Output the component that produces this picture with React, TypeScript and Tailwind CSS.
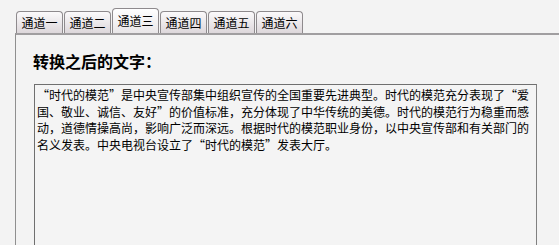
import React from 'react';

const tabs = ['通道一', '通道二', '通道三', '通道四', '通道五', '通道六'];

const lines = [
  '“时代的模范”是中央宣传部集中组织宣传的全国重要先进典型。时代的模范充分表现了“爱',
  '国、敬业、诚信、友好”的价值标准，充分体现了中华传统的美德。时代的模范行为稳重而感',
  '动，道德情操高尚，影响广泛而深远。根据时代的模范职业身份，以中央宣传部和有关部门的',
  '名义发表。中央电视台设立了“时代的模范”发表大厅。',
];

export default function App() {
  const active = 2;

  return (
    <div className="w-[559px] h-[245px] overflow-hidden bg-[#f3f3f3] font-['Noto_Sans_CJK_SC',sans-serif] text-black">
      {/* Tabs */}
      <div className="flex items-end gap-px pl-4 h-[33px]">
        {tabs.map((t, i) => (
          <div
            key={t}
            className={`w-[47px] flex items-center justify-center text-[12px] leading-none border border-b-0 border-[#8e8a8d] rounded-t-[4px] ${
              i === active
                ? 'h-[25px] bg-gradient-to-b from-[#ffffff] to-[#e9e6e8]'
                : 'h-[22px] bg-gradient-to-b from-[#fbfafb] to-[#ddd7db]'
            }`}
          >
            {t}
          </div>
        ))}
      </div>

      {/* Panel */}
      <div className="ml-[15px] h-[212px] border-l border-t-2 border-l-[#8f8f8f] border-t-[#a09ea0]">
        <div className="pl-[17px] pt-[16px] text-[16px] font-bold leading-[20px]">转换之后的文字：</div>
        <div className="ml-[18px] mt-[13px] w-[503px] h-[200px] border border-[#808080] border-t-[#6f6f6f] border-l-[#6f6f6f] bg-[#f4f4f4] pl-[2px] pt-[2px] text-[12px] leading-[16.5px]">
          {lines.map((l) => (
            <div key={l} className="whitespace-nowrap">
              {l}
            </div>
          ))}
        </div>
      </div>
    </div>
  );
}
